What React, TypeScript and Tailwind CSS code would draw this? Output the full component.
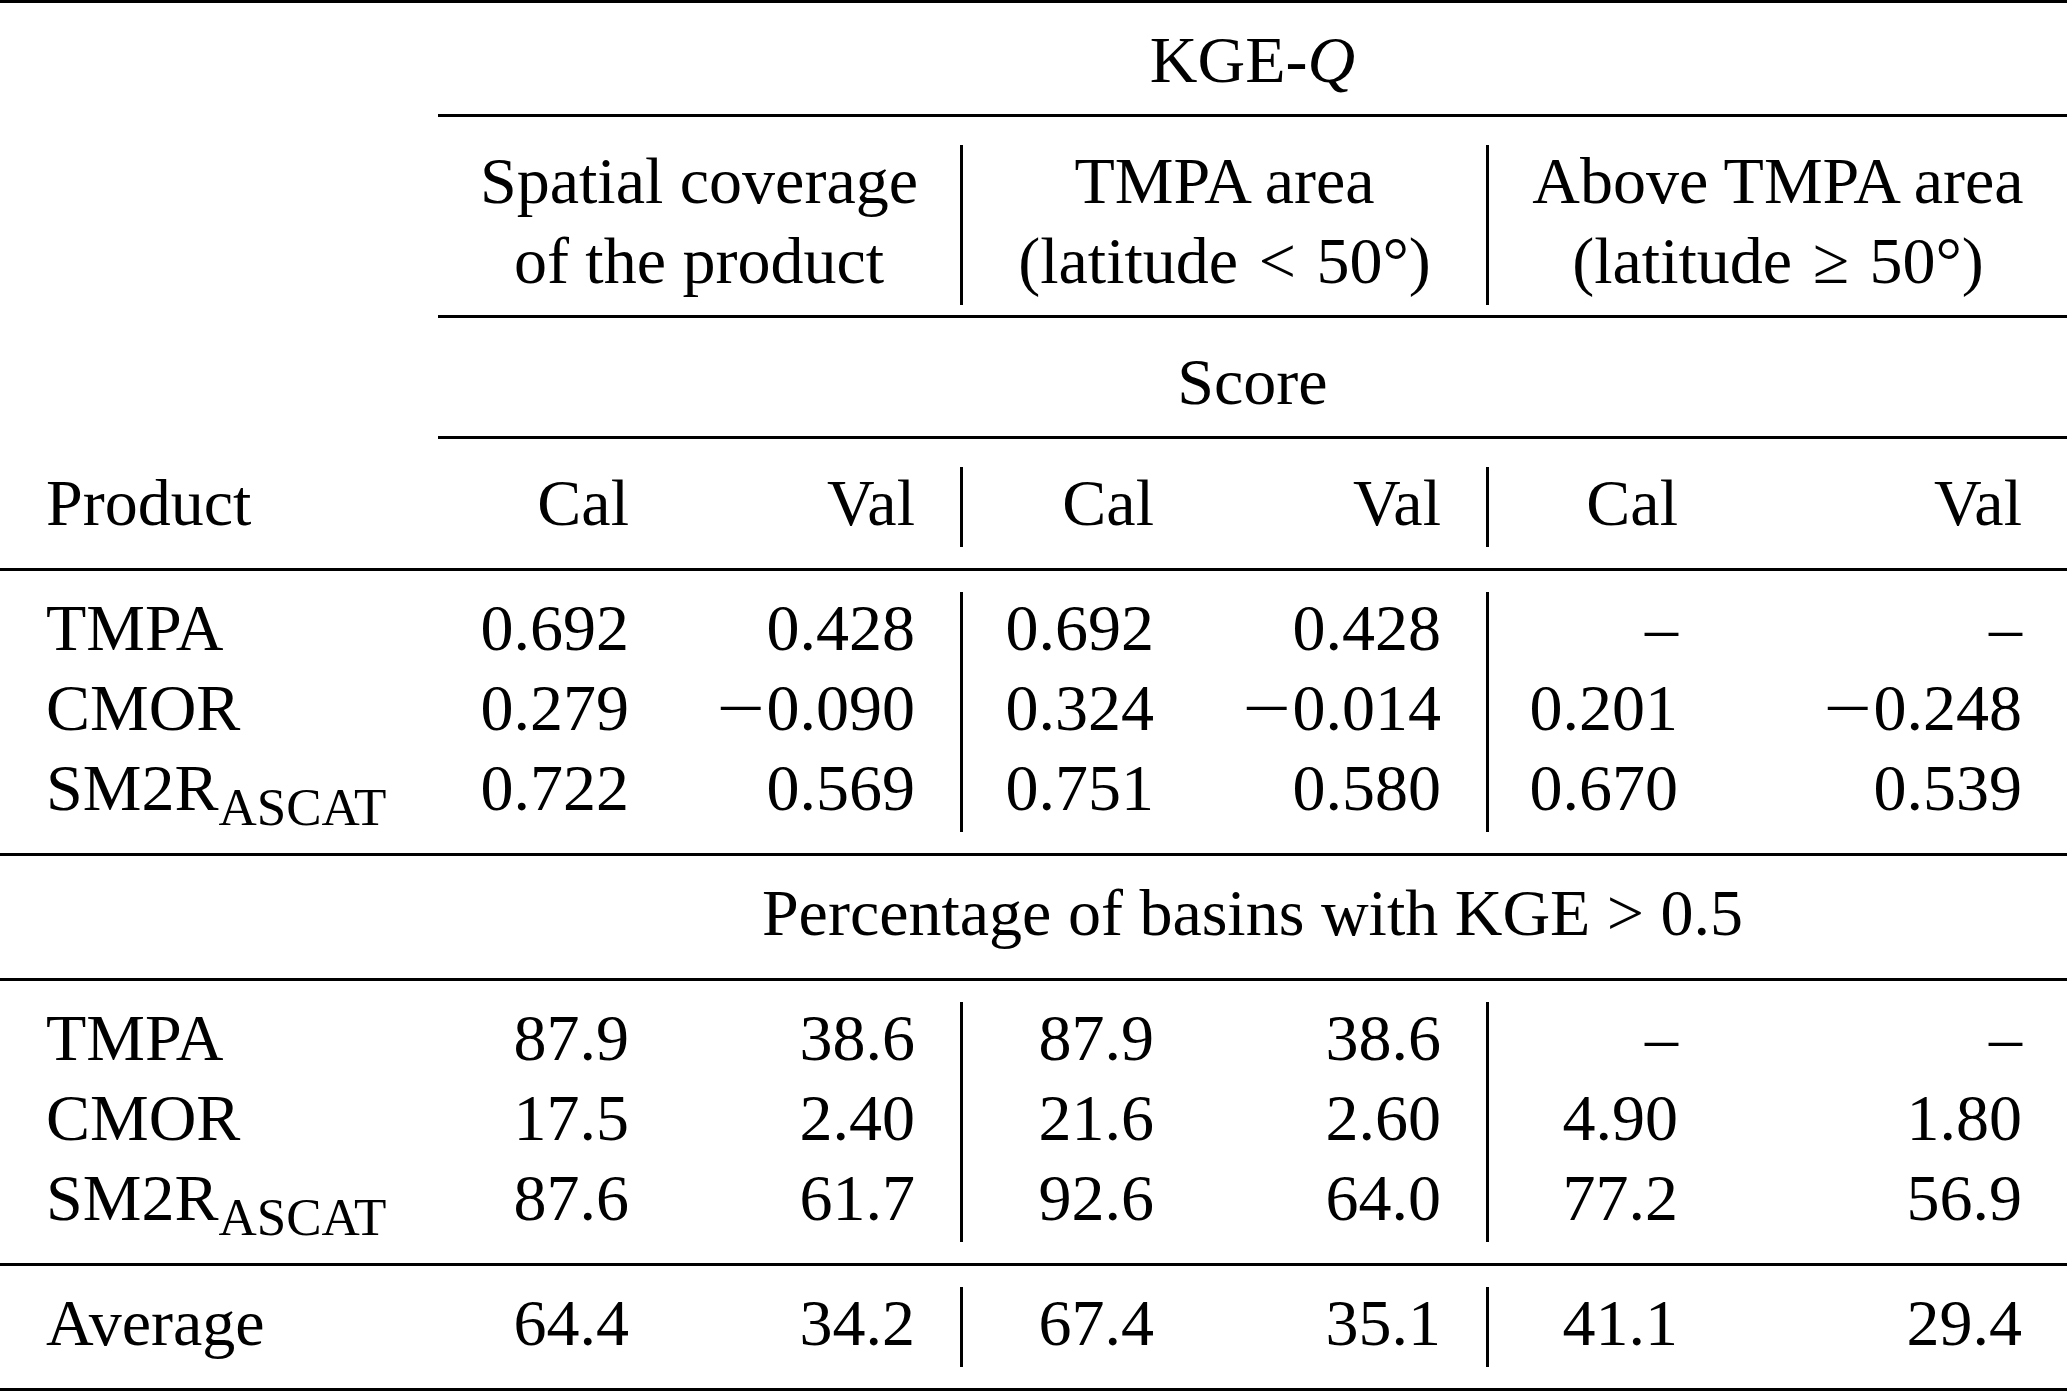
import React from "react"

interface DataRow {
  product: string
  sub?: string
  values: string[]
}

const scoreRows: DataRow[] = [
  { product: "TMPA", values: ["0.692", "0.428", "0.692", "0.428", "–", "–"] },
  { product: "CMOR", values: ["0.279", "−0.090", "0.324", "−0.014", "0.201", "−0.248"] },
  { product: "SM2R", sub: "ASCAT", values: ["0.722", "0.569", "0.751", "0.580", "0.670", "0.539"] },
]

const pctRows: DataRow[] = [
  { product: "TMPA", values: ["87.9", "38.6", "87.9", "38.6", "–", "–"] },
  { product: "CMOR", values: ["17.5", "2.40", "21.6", "2.60", "4.90", "1.80"] },
  { product: "SM2R", sub: "ASCAT", values: ["87.6", "61.7", "92.6", "64.0", "77.2", "56.9"] },
]

const grid = "grid grid-cols-[438px_236px_286px_239px_287px_237px_344px]"

function Rule({ partial = false, className = "" }: { partial?: boolean; className?: string }) {
  return <div className={`h-[3px] bg-black ${partial ? "ml-[438px]" : ""} ${className}`} />
}

// math minus is wider than the font's own glyph
function Num({ value }: { value: string }) {
  if (!value.startsWith("−")) return <>{value}</>
  return (
    <>
      <span className="inline-block scale-x-[1.3] mr-[7px]">−</span>
      {value.slice(1)}
    </>
  )
}

// value cells: right aligned, groups 2 and 3 start with a vertical rule
function ValueCell({ value, index }: { value: string; index: number }) {
  const divider = index === 2 || index === 4 ? "border-l-[3px] border-black" : ""
  return (
    <div className={`h-[80px] text-right pr-[45px] whitespace-nowrap ${divider}`}>
      <Num value={value} />
    </div>
  )
}

function ProductCell({ product, sub }: { product: string; sub?: string }) {
  return (
    <div className="h-[80px] pl-[46px] whitespace-nowrap">
      {product}
      {sub && <sub className="text-[53px] -bottom-[15px]">{sub}</sub>}
    </div>
  )
}

function DataBlock({ rows }: { rows: DataRow[] }) {
  return (
    <div className={grid}>
      {rows.map((row) => (
        <React.Fragment key={row.product}>
          <ProductCell product={row.product} sub={row.sub} />
          {row.values.map((v, i) => (
            <ValueCell key={i} value={v} index={i} />
          ))}
        </React.Fragment>
      ))}
    </div>
  )
}

function SpanTitle({ children }: { children: React.ReactNode }) {
  return (
    <div className={grid}>
      <div className="col-start-2 col-span-6 h-[80px] text-center whitespace-nowrap">{children}</div>
    </div>
  )
}

export default function App() {
  return (
    <div
      className="w-[2067px] h-[1391px] bg-white text-black text-[66px] leading-[72px] flex flex-col"
      style={{ fontFamily: '"Liberation Serif", "Times New Roman", serif' }}
    >
      <Rule />

      <div className="mt-[21px]">
        <SpanTitle>
          KGE-<span className="italic">Q</span>
        </SpanTitle>
      </div>
      <Rule partial className="mt-[10px]" />

      <div className={`${grid} mt-[28px]`}>
        <div />
        <div className="col-span-2 text-center whitespace-nowrap">
          <div className="h-[80px]">Spatial coverage</div>
          <div className="h-[80px]">of the product</div>
        </div>
        <div className="col-span-2 text-center whitespace-nowrap border-l-[3px] border-black">
          <div className="h-[80px]">TMPA area</div>
          <div className="h-[80px]">
            (latitude <span className="mx-[4px]">&lt;</span> 50°)
          </div>
        </div>
        <div className="col-span-2 text-center whitespace-nowrap border-l-[3px] border-black">
          <div className="h-[80px]">Above TMPA area</div>
          <div className="h-[80px]">
            (latitude <span className="mx-[4px]">≥</span> 50°)
          </div>
        </div>
      </div>
      <Rule partial className="mt-[10px]" />

      <div className="mt-[28px]">
        <SpanTitle>Score</SpanTitle>
      </div>
      <Rule partial className="mt-[10px]" />

      <div className={`${grid} mt-[28px]`}>
        <div className="h-[80px] pl-[46px]">Product</div>
        {["Cal", "Val", "Cal", "Val", "Cal", "Val"].map((h, i) => (
          <ValueCell key={i} value={h} index={i} />
        ))}
      </div>
      <Rule className="mt-[21px]" />

      <div className="mt-[21px]">
        <DataBlock rows={scoreRows} />
      </div>
      <Rule className="mt-[21px]" />

      <div className="mt-[21px]">
        <SpanTitle>Percentage of basins with KGE &gt; 0.5</SpanTitle>
      </div>
      <Rule className="mt-[21px]" />

      <div className="mt-[21px]">
        <DataBlock rows={pctRows} />
      </div>
      <Rule className="mt-[21px]" />

      <div className={`${grid} mt-[21px]`}>
        <ProductCell product="Average" />
        {["64.4", "34.2", "67.4", "35.1", "41.1", "29.4"].map((v, i) => (
          <ValueCell key={i} value={v} index={i} />
        ))}
      </div>
      <Rule className="mt-[21px]" />
    </div>
  )
}
